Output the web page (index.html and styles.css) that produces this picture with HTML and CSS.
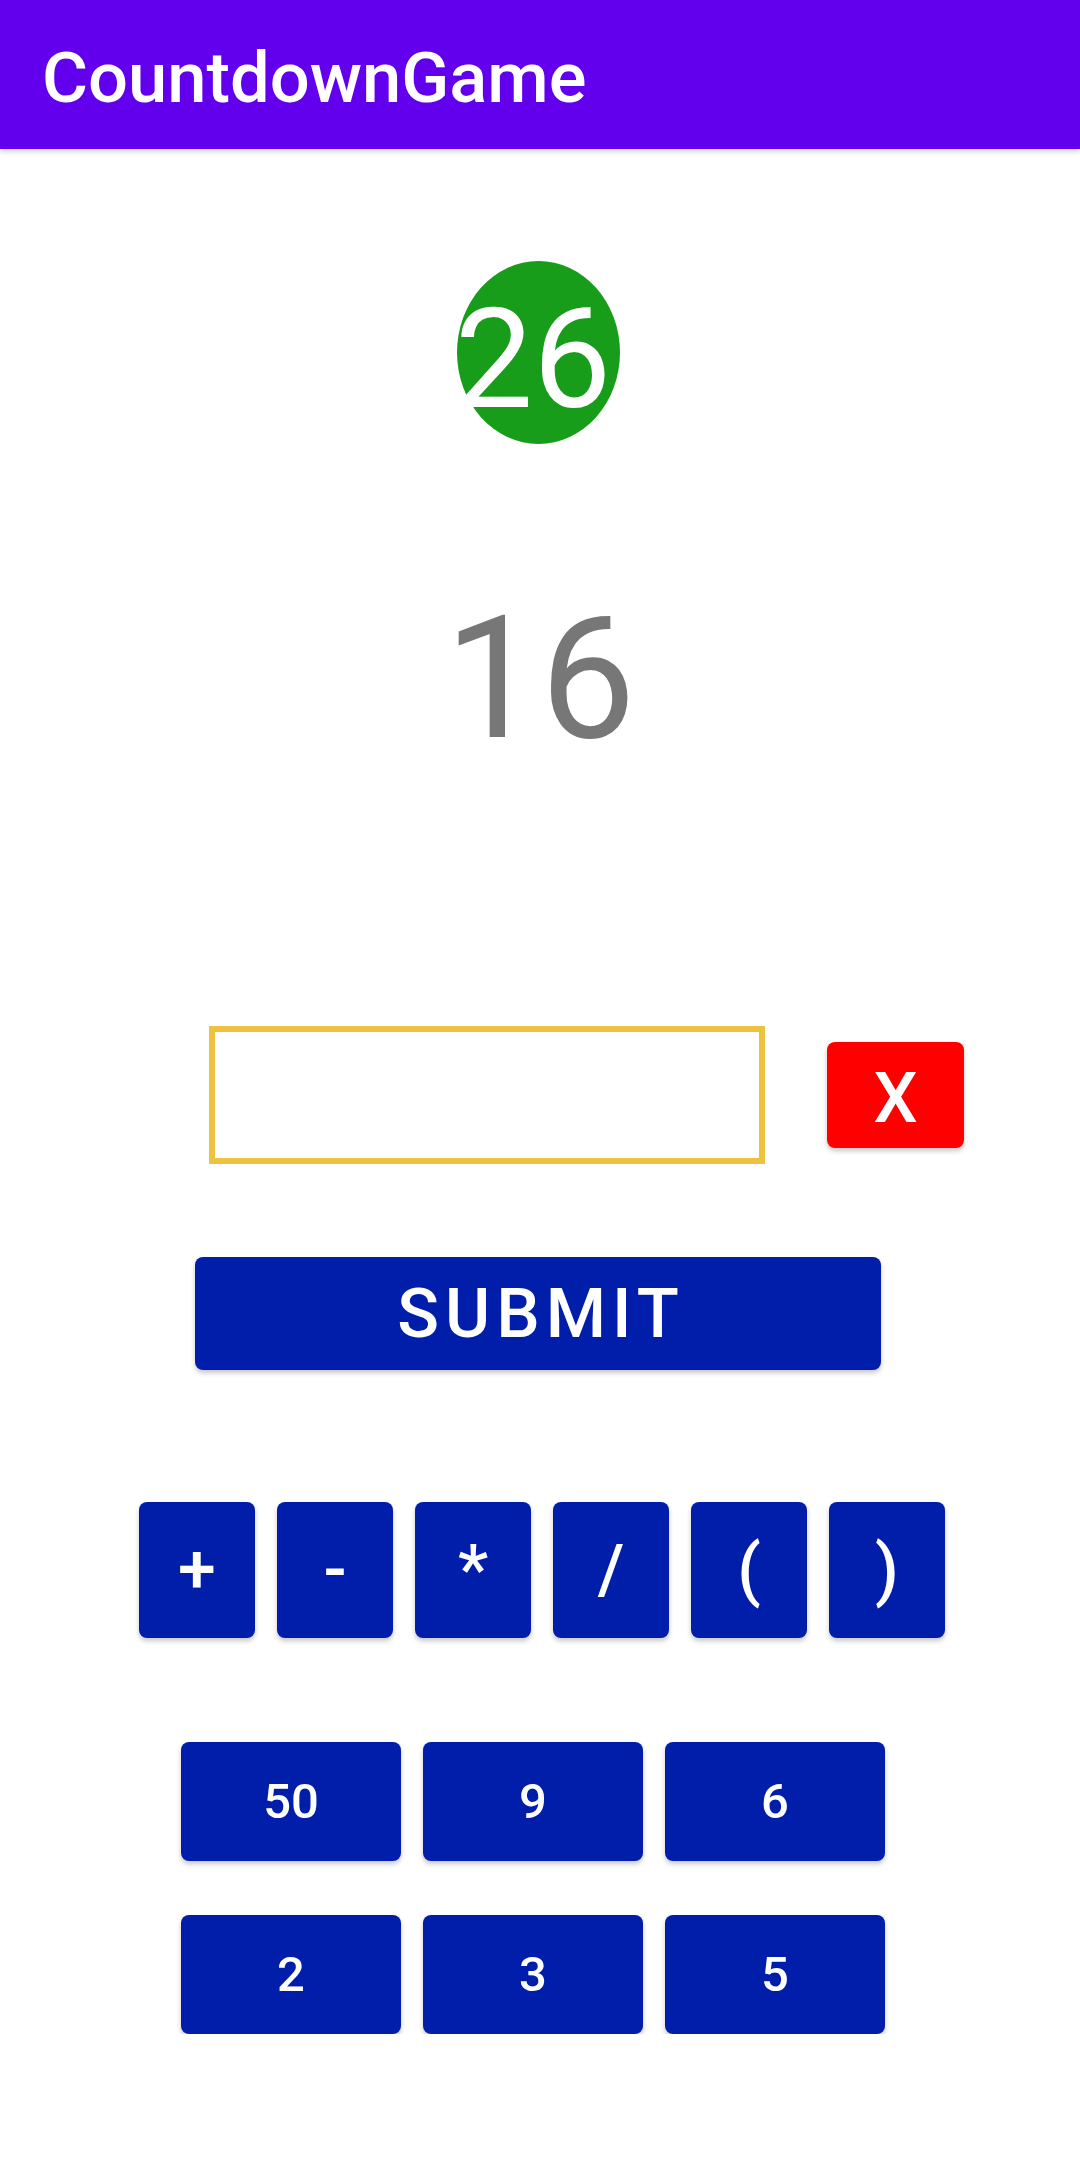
FILE: index.html
```html
<!DOCTYPE html>
<html>
<head>
<meta charset="utf-8">
<link rel="stylesheet" href="styles.css">
</head>
<body>
<header class="appbar"><span class="title">CountdownGame</span></header>
<main class="content">
  <div class="timer"><span class="timer-text">26</span></div>
  <div class="target">16</div>
  <div class="input-row">
    <div class="answer-box"></div>
    <button class="btn btn-clear">X</button>
  </div>
  <button class="btn btn-submit">SUBMIT</button>
  <div class="ops-row">
    <button class="btn btn-op">+</button>
    <button class="btn btn-op">-</button>
    <button class="btn btn-op">*</button>
    <button class="btn btn-op">/</button>
    <button class="btn btn-op">(</button>
    <button class="btn btn-op">)</button>
  </div>
  <div class="nums-grid">
    <button class="btn btn-num">50</button>
    <button class="btn btn-num">9</button>
    <button class="btn btn-num">6</button>
    <button class="btn btn-num">2</button>
    <button class="btn btn-num">3</button>
    <button class="btn btn-num">5</button>
  </div>
</main>
</body>
</html>
```
FILE: styles.css
```css
* { box-sizing: border-box; }
html, body {
  margin: 0;
  padding: 0;
  background: #ffffff;
  font-family: Roboto, "Noto Sans", sans-serif;
}
.appbar {
  height: 149px;
  background: #6200ee;
  display: flex;
  align-items: center;
  padding: 8px 0 0 42px;
  box-shadow: 0 2px 6px rgba(0,0,0,0.22);
  position: relative;
  z-index: 1;
}
.title {
  color: #ffffff;
  font-size: 70.5px;
  font-weight: 500;
  line-height: 1;
}
.content {
  display: flex;
  flex-direction: column;
  align-items: flex-start;
}
.timer {
  margin: 112px 0 0 457px;
  width: 163px;
  height: 183px;
  border-radius: 50%;
  background: #179d19;
  display: flex;
  justify-content: center;
  align-items: flex-start;
  padding: 29px 11px 0 0;
}
.timer-text {
  color: #ffffff;
  font-size: 139px;
  line-height: 1;
  font-weight: 400;
  white-space: nowrap;
}
.target {
  align-self: center;
  margin-top: 150px;
  font-size: 170px;
  line-height: 170px;
  height: 170px;
  color: #777777;
  font-weight: 400;
}
.input-row {
  margin: 262px 0 0 209px;
  display: flex;
  align-items: center;
  gap: 62px;
}
.answer-box {
  width: 556px;
  height: 138px;
  border: 6px solid #eec23f;
  background: #ffffff;
}
.btn {
  border: none;
  margin: 0;
  padding: 0;
  color: #ffffff;
  font-family: Roboto, "Noto Sans", sans-serif;
  font-weight: 500;
  display: flex;
  align-items: center;
  justify-content: center;
  border-radius: 8px;
  background: #011eab;
  box-shadow: 0 3px 5px rgba(0,0,0,0.22);
  line-height: 1;
}
.btn-clear {
  width: 137px;
  height: 106px;
  background: #fe0000;
  font-size: 70px;
  padding-top: 6px;
}
.btn-submit {
  margin: 93px 0 0 195px;
  width: 686px;
  height: 113px;
  font-size: 69px;
  letter-spacing: 6px;
  padding-left: 6px;
}
.ops-row {
  margin: 132px 0 0 139px;
  display: flex;
  gap: 22px;
}
.btn-op {
  width: 116px;
  height: 136px;
  font-size: 68px;
}
.nums-grid {
  margin: 104px 0 0 181px;
  display: grid;
  grid-template-columns: repeat(3, 220px);
  grid-auto-rows: 119px;
  column-gap: 22px;
  row-gap: 54px;
}
.btn-num {
  font-size: 49px;
}
```
